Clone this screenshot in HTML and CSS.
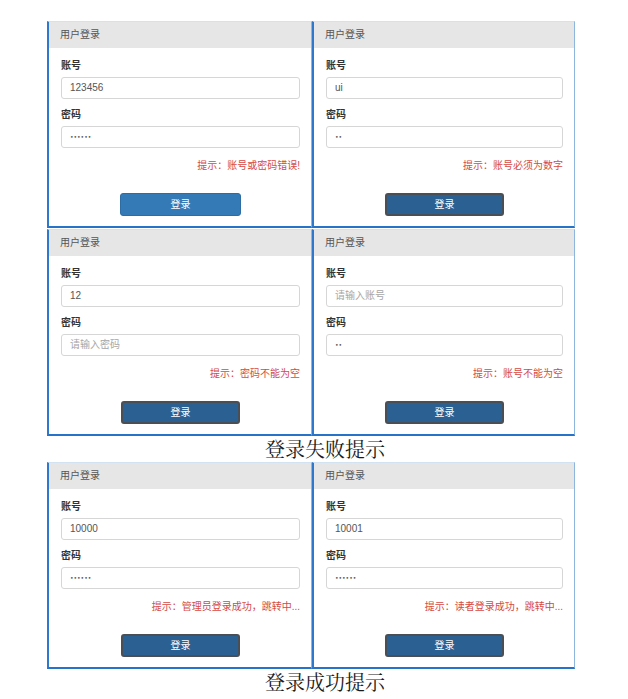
FILE: index.html
```html
<!DOCTYPE html>
<html lang="zh-CN">
<head>
<meta charset="utf-8">
<title>登录提示</title>
<link rel="stylesheet" href="styles.css">
</head>
<body>
<div class="page">
  <div class="figure">
    <div class="panel">
      <div class="panel-head">用户登录</div>
      <div class="panel-body">
        <div class="label">账号</div>
        <div class="field">123456</div>
        <div class="label second">密码</div>
        <div class="field pw">••••••</div>
        <div class="hint">提示：账号或密码错误!</div>
        <div class="btn-row"><span class="btn primary">登录</span></div>
      </div>
    </div>
    <div class="panel">
      <div class="panel-head">用户登录</div>
      <div class="panel-body">
        <div class="label">账号</div>
        <div class="field">ui</div>
        <div class="label second">密码</div>
        <div class="field pw">••</div>
        <div class="hint">提示：账号必须为数字</div>
        <div class="btn-row"><span class="btn active">登录</span></div>
      </div>
    </div>
    <div class="panel">
      <div class="panel-head">用户登录</div>
      <div class="panel-body">
        <div class="label">账号</div>
        <div class="field">12</div>
        <div class="label second">密码</div>
        <div class="field placeholder">请输入密码</div>
        <div class="hint">提示：密码不能为空</div>
        <div class="btn-row"><span class="btn active">登录</span></div>
      </div>
    </div>
    <div class="panel">
      <div class="panel-head">用户登录</div>
      <div class="panel-body">
        <div class="label">账号</div>
        <div class="field placeholder">请输入账号</div>
        <div class="label second">密码</div>
        <div class="field pw">••</div>
        <div class="hint">提示：账号不能为空</div>
        <div class="btn-row"><span class="btn active">登录</span></div>
      </div>
    </div>
  </div>
  <div class="caption">登录失败提示</div>
  <div class="figure">
    <div class="panel">
      <div class="panel-head">用户登录</div>
      <div class="panel-body">
        <div class="label">账号</div>
        <div class="field">10000</div>
        <div class="label second">密码</div>
        <div class="field pw">••••••</div>
        <div class="hint">提示：管理员登录成功，跳转中...</div>
        <div class="btn-row"><span class="btn active">登录</span></div>
      </div>
    </div>
    <div class="panel">
      <div class="panel-head">用户登录</div>
      <div class="panel-body">
        <div class="label">账号</div>
        <div class="field">10001</div>
        <div class="label second">密码</div>
        <div class="field pw">••••••</div>
        <div class="hint">提示：读者登录成功，跳转中...</div>
        <div class="btn-row"><span class="btn active">登录</span></div>
      </div>
    </div>
  </div>
  <div class="caption">登录成功提示</div>
</div>
</body>
</html>
```

FILE: styles.css
```css
html, body {
  margin: 0;
  padding: 0;
  background: #ffffff;
}

.page {
  padding-top: 21px;
  font-family: "Liberation Sans", "Noto Sans CJK SC", sans-serif;
}

.figure {
  display: grid;
  grid-template-columns: 265px 263px;
  row-gap: 1px;
  margin-left: 47px;
  width: 528px;
}

.panel {
  height: 207px;
  box-sizing: border-box;
  background: #ffffff;
  border-top: 1px solid #d3e2f1;
  border-left: 2px solid #2f79cc;
  border-right: 1px solid #8db6df;
  border-bottom: 2px solid #2673c9;
  display: flex;
  flex-direction: column;
}

.panel-head {
  height: 26px;
  line-height: 26px;
  flex: none;
  background: #e6e6e6;
  color: #555555;
  font-size: 10px;
  padding-left: 11px;
}

.panel-body {
  padding: 11px 11px 0 12px;
  display: flex;
  flex-direction: column;
}

.label {
  font-size: 10px;
  line-height: 14px;
  font-weight: bold;
  color: #333333;
  margin-bottom: 4px;
}

.label.second {
  margin-top: 9px;
}

.field {
  height: 22px;
  box-sizing: border-box;
  border: 1px solid #d6d6d6;
  border-radius: 3px;
  padding-left: 8px;
  font-size: 10px;
  line-height: 20px;
  color: #555555;
  background: #ffffff;
}

.field.placeholder {
  color: #a6a6a6;
}

.field.pw {
  font-family: "DejaVu Sans", sans-serif;
  font-size: 6px;
  letter-spacing: 0;
  color: #555555;
}

.hint {
  margin-top: 11px;
  text-align: right;
  font-size: 10px;
  line-height: 14px;
  color: #d44a45;
}

.btn-row {
  display: flex;
  justify-content: center;
  margin-top: 20px;
}

.btn {
  width: 121px;
  height: 23px;
  box-sizing: border-box;
  border-radius: 3px;
  color: #ffffff;
  font-size: 10px;
  line-height: 23px;
  text-align: center;
}

.btn.primary {
  background: #337ab7;
  border: 1px solid #2e6da4;
  line-height: 21px;
}

.btn.active {
  width: 119px;
  background: #2a6092;
  border: 2px solid #4a4f55;
  line-height: 19px;
}

.caption {
  width: 528px;
  margin-left: 47px;
  box-sizing: border-box;
  padding-left: 28px;
  text-align: center;
  font-family: "Noto Serif CJK SC", "Liberation Serif", "Noto Sans CJK SC", serif;
  font-size: 20px;
  line-height: 26px;
  color: #1a1a1a;
}
```
